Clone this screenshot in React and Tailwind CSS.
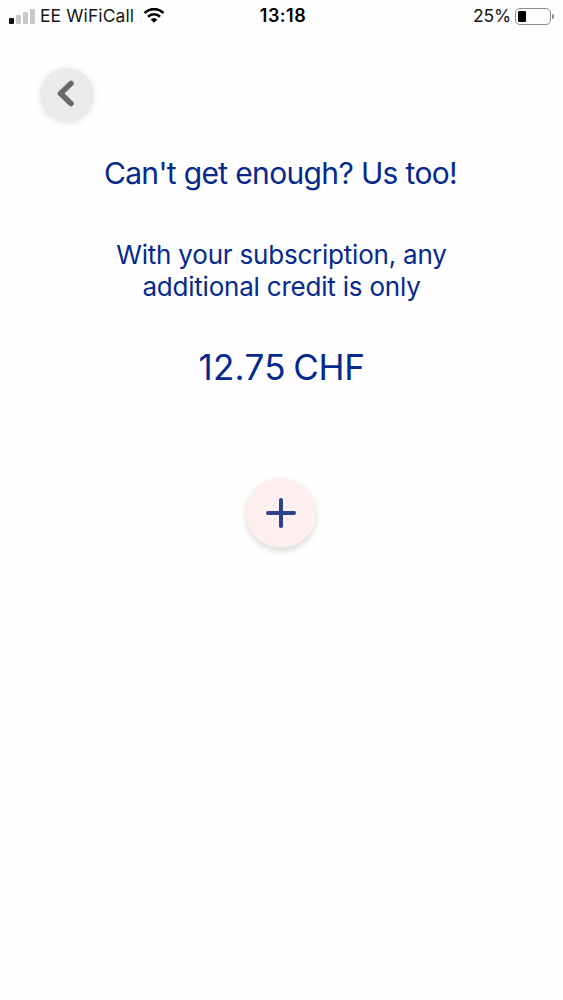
function SignalBars() {
  return (
    <div className="flex h-[15px] w-[26px] items-end gap-[2px]">
      <span className="h-[6px] w-[5px] rounded-[1px] bg-[#111]" />
      <span className="h-[9px] w-[5px] rounded-[1px] bg-[#c8c8ca]" />
      <span className="h-[12px] w-[5px] rounded-[1px] bg-[#c8c8ca]" />
      <span className="h-[15px] w-[5px] rounded-[1px] bg-[#c8c8ca]" />
    </div>
  );
}

function WifiIcon() {
  return (
    <svg width="22" height="16" viewBox="0 0 22 16" fill="none">
      <path
        d="M1.5 5a13.6 13.6 0 0 1 19 0M5 8.7a8.6 8.6 0 0 1 12 0"
        stroke="#050505"
        strokeWidth="2.7"
      />
      <path d="M7.6 11.5a5 5 0 0 1 6.8 0L11 14.8z" fill="#050505" />
    </svg>
  );
}

function Battery() {
  return (
    <div className="flex items-center gap-[1px]">
      <div className="h-[17px] w-[36px] rounded-[5px] border-[1.5px] border-[#8e8e92] p-[2px]">
        <div className="h-full w-[8px] rounded-[1px] bg-black" />
      </div>
      <span className="h-[5px] w-[2px] rounded-r-full bg-[#8e8e92]" />
    </div>
  );
}

function StatusBar() {
  return (
    <div className="grid h-8 grid-cols-[1fr_auto_1fr] items-center pr-[9px] pl-[9px] text-[17.5px] leading-8 text-[#161616]">
      <div className="flex items-center">
        <SignalBars />
        <span className="ml-[5px] tracking-[0.1px]">EE WiFiCall</span>
        <span className="ml-[9px]">
          <WifiIcon />
        </span>
      </div>
      <span className="pl-[3px] text-[18px] font-semibold tracking-[0.5px] text-black">
        13:18
      </span>
      <div className="flex items-center justify-end gap-1">
        <span className="tracking-[-0.2px]">25%</span>
        <Battery />
      </div>
    </div>
  );
}

export default function App() {
  return (
    <div className="flex h-[1000px] w-[563px] flex-col bg-[#fefefe] font-['Inter',sans-serif] text-[#05298c]">
      <StatusBar />
      <header className="h-[121px] pt-9 pl-10">
        <button
          type="button"
          aria-label="Back"
          className="flex size-[54px] items-center justify-center rounded-full bg-[#ebe9ec] shadow-[0_1px_7px_rgba(0,0,0,0.1)]"
        >
          <svg width="54" height="54" viewBox="0 0 54 54" fill="none">
            <path
              d="M31 15.5 20.5 25.5 31 35.5"
              stroke="#69676a"
              strokeWidth="5.5"
              strokeLinecap="round"
              strokeLinejoin="round"
            />
          </svg>
        </button>
      </header>
      <main className="flex flex-col items-center pr-[2px] text-center">
        <h1 className="text-[30px] leading-10 tracking-[-0.65px]">
          Can't get enough? Us too!
        </h1>
        <p className="mt-[46px] pl-[2px] text-[26px] leading-[31.5px] tracking-[-0.21px]">
          With your subscription, any
          <br />
          additional credit is only
        </p>
        <p className="mt-[45px] pl-[2px] text-[35px] leading-10 [word-spacing:-2.5px]">
          <span className="tracking-[0.3px]">12.75</span>{" "}
          <span className="tracking-[-0.3px]">CHF</span>
        </p>
        <button
          type="button"
          aria-label="Add credit"
          className="mt-[91px] flex size-[70px] items-center justify-center rounded-full bg-[#fcefee] shadow-[0_3px_6px_rgba(0,0,0,0.15)]"
        >
          <svg width="30" height="30" viewBox="0 0 30 30" fill="none">
            <path
              d="M15 2v26M2 15h26"
              stroke="#2b428b"
              strokeWidth="4"
              strokeLinecap="round"
            />
          </svg>
        </button>
      </main>
    </div>
  );
}
